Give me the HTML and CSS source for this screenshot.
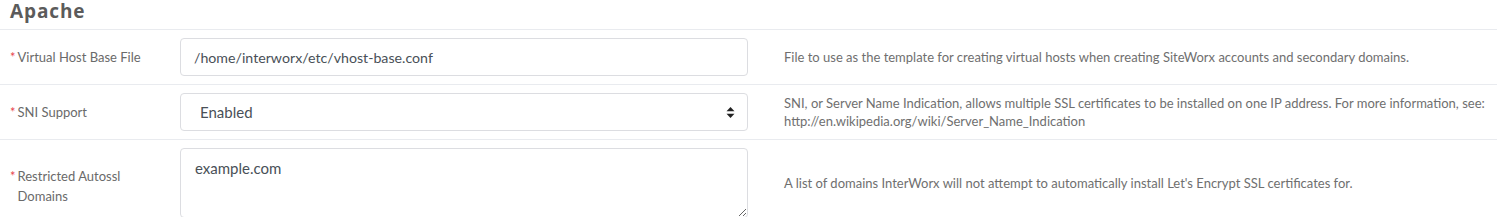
FILE: index.html
```html
<!DOCTYPE html>
<html lang="en">
<head>
    <meta charset="UTF-8">
    <title>Apache Settings</title>
    <link rel="stylesheet" href="styles.css">
</head>
<body>
    <div class="panel">
        <h3 class="panel-title">Apache</h3>

        <div class="form-row">
            <label class="field-label"><span class="req">*</span><span>Virtual Host Base File</span></label>
            <div class="field">
                <input type="text" class="text-input" value="/home/interworx/etc/vhost-base.conf">
            </div>
            <div class="help">File to use as the template for creating virtual hosts when creating SiteWorx accounts and secondary domains.</div>
        </div>

        <div class="form-row">
            <label class="field-label"><span class="req">*</span><span>SNI Support</span></label>
            <div class="field">
                <div class="select-box">
                    <span>Enabled</span>
                    <svg class="caret" width="9" height="13" viewBox="0 0 9 13">
                        <path d="M4.5 1 L8.5 5.2 L0.5 5.2 Z" fill="#222"/>
                        <path d="M4.5 12 L8.5 7.8 L0.5 7.8 Z" fill="#222"/>
                    </svg>
                </div>
            </div>
            <div class="help">SNI, or Server Name Indication, allows multiple SSL certificates to be installed on one IP address. For more information, see: http://en.wikipedia.org/wiki/Server_Name_Indication</div>
        </div>

        <div class="form-row">
            <label class="field-label wrapped"><span class="req">*</span><span>Restricted Autossl Domains</span></label>
            <div class="field">
                <textarea class="text-area">example.com</textarea>
            </div>
            <div class="help">A list of domains InterWorx will not attempt to automatically install Let's Encrypt SSL certificates for.</div>
        </div>
    </div>
</body>
</html>
```

FILE: styles.css
```css
body {
    margin: 0;
    background: #fff;
    font-family: Lato, "Noto Sans", sans-serif;
    color: #666;
}
.panel {
    width: 100%;
}
.panel-title {
    margin: 0;
    height: 30px;
    line-height: 22px;
    padding-left: 10px;
    font-family: "Open Sans", sans-serif;
    font-size: 19px;
    font-weight: bold;
    letter-spacing: 0.9px;
    color: #5b5b5b;
    border-bottom: 1px solid #e9ebef;
    box-sizing: border-box;
}
.form-row {
    display: grid;
    grid-template-columns: 180px 569px 1fr;
    align-items: center;
    padding: 8px 0;
    border-bottom: 1px solid #e9ebef;
}
.field-label {
    display: flex;
    align-items: flex-start;
    padding-left: 10px;
    padding-right: 36px;
    font-size: 13px;
    line-height: 20px;
    color: #6a6a6a;
}
.field-label.wrapped {
    padding-top: 6px;
}
.req {
    color: #e8474f;
    margin-right: 2px;
    flex: none;
}
.text-input,
.select-box,
.text-area {
    display: block;
    box-sizing: border-box;
    width: 568px;
    border: 1px solid #dcdde1;
    border-radius: 4px;
    font-family: inherit;
    font-size: 15px;
    color: #495057;
    background: #fff;
}
.text-input {
    height: 38px;
    padding: 0 13px;
    font-size: 14.2px;
}
.select-box {
    height: 38px;
    padding: 0 12px 0 19px;
    display: flex;
    align-items: center;
    justify-content: space-between;
}
.text-area {
    height: 70px;
    padding: 10px 14px;
    resize: vertical;
    line-height: 18px;
}
.help {
    padding-left: 35px;
    padding-right: 8px;
    font-size: 13px;
    line-height: 18px;
    color: #6f6f6f;
}
```
